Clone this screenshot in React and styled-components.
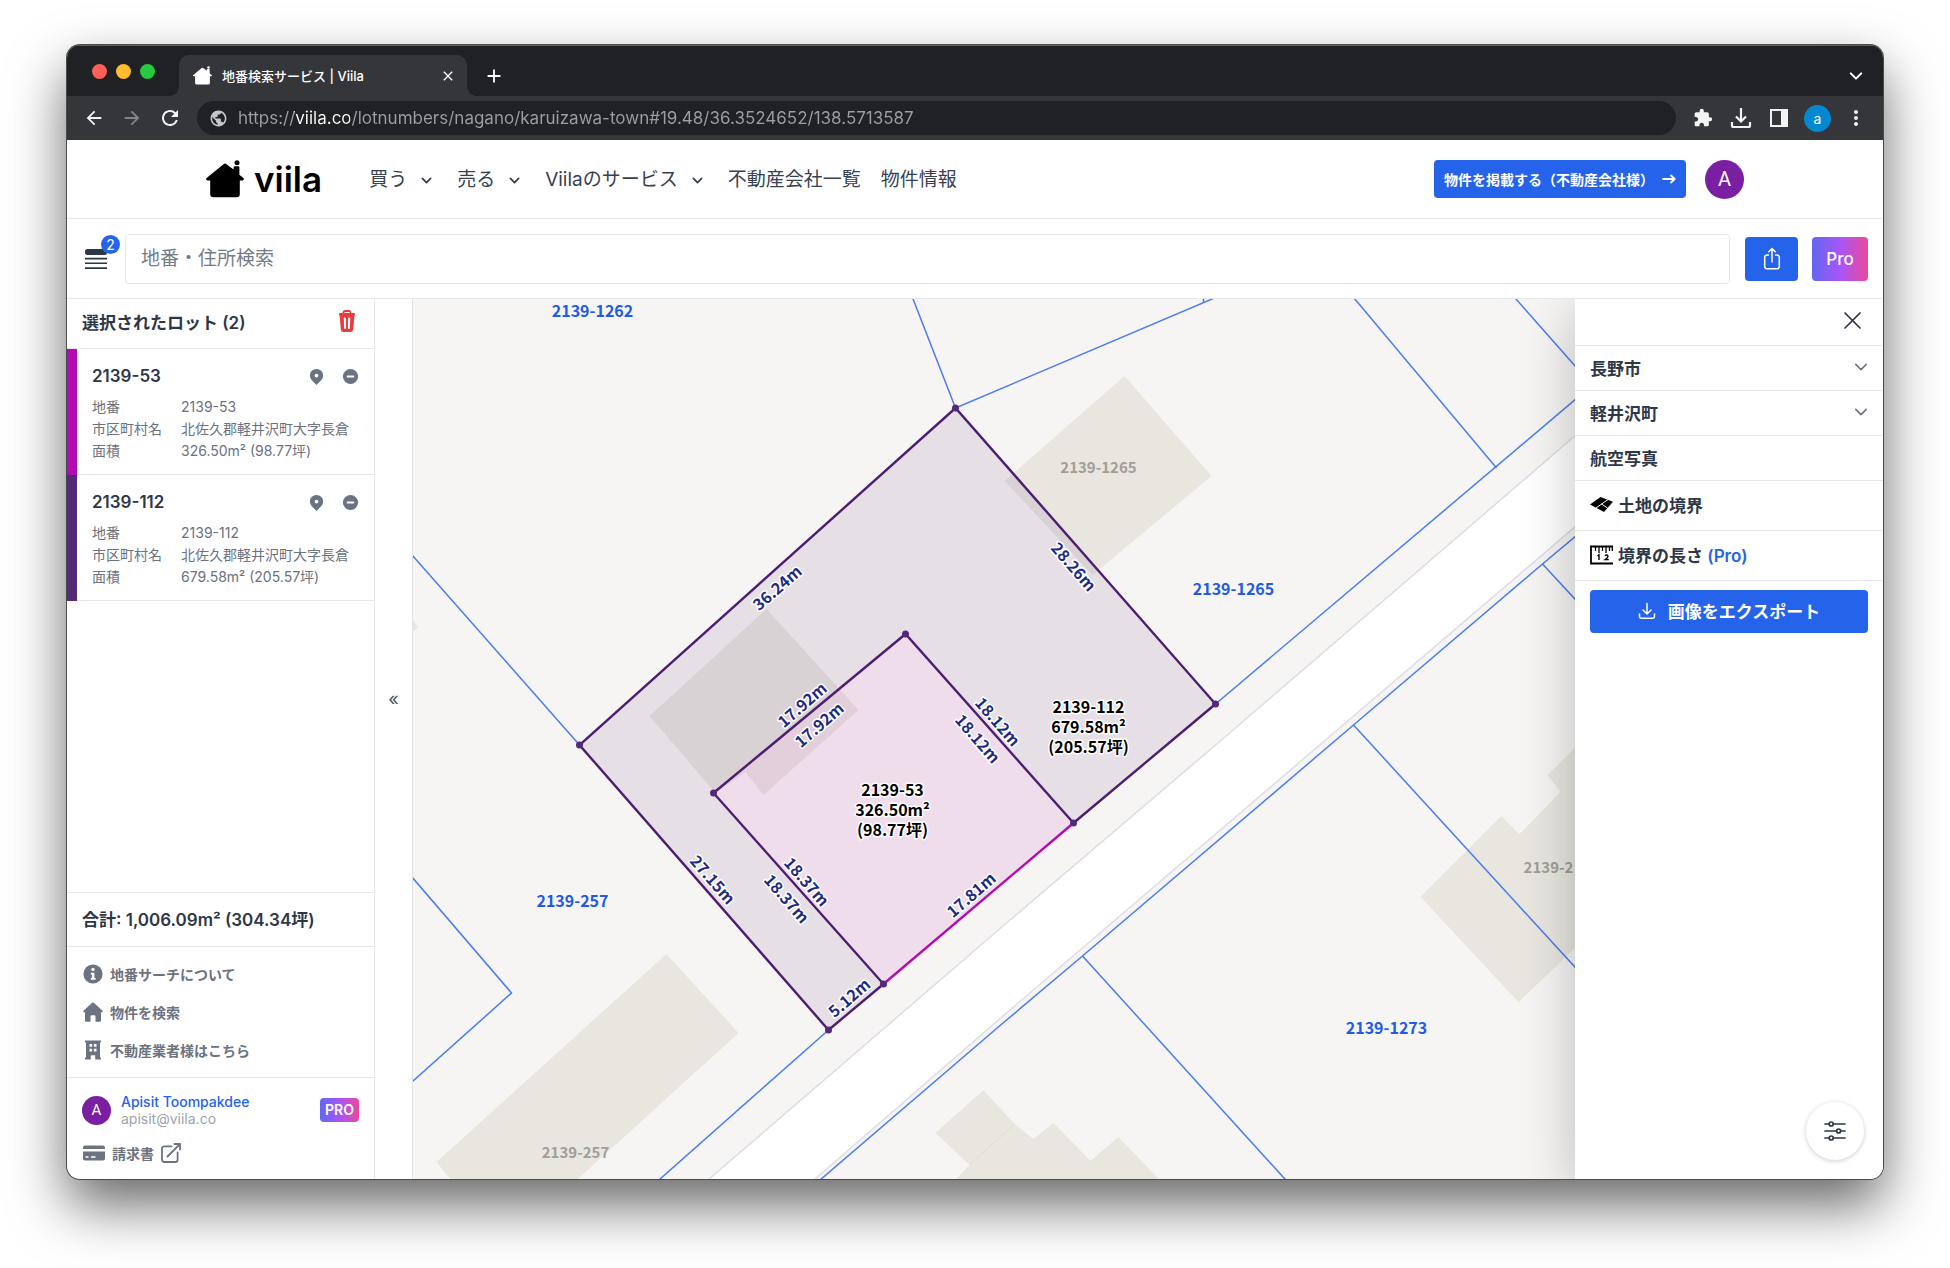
import React from "react";
import styled, { createGlobalStyle } from "styled-components";
import {
  MdAdd,
  MdArrowBack,
  MdArrowForward,
  MdClose,
  MdExtension,
  MdMoreVert,
  MdPublic,
  MdRefresh,
} from "react-icons/md";
import { HiLocationMarker, HiMinusCircle } from "react-icons/hi";

const sans = `Inter, "Noto Sans CJK JP", sans-serif`;

const GlobalStyle = createGlobalStyle`
  * {
    box-sizing: border-box;
  }
  body {
    margin: 0;
    background: #fff;
    color: #2d3748;
    font-family: ${sans};
  }
  button, input {
    font-family: inherit;
    padding: 0;
    border: 0;
    background: none;
    color: inherit;
  }
  button {
    cursor: pointer;
  }
  a {
    color: inherit;
    text-decoration: none;
  }
  svg {
    display: block;
    flex-shrink: 0;
  }
`;

/* ---------- data ---------- */

const lots = [
  {
    id: "2139-53",
    color: "#b10bb1",
    city: "北佐久郡軽井沢町大字長倉",
    area: "326.50m² (98.77坪)",
  },
  {
    id: "2139-112",
    color: "#542a78",
    city: "北佐久郡軽井沢町大字長倉",
    area: "679.58m² (205.57坪)",
  },
];

const roads = "1580,432 1222,740 1000,929 705,1183 811,1183 1000,1019 1326,740 1580,523";

const buildings = [
  "1125,376 1212,476 1093,575 1005,481",
  "767,609 859,710 764,795 746,772 716,793 650,716",
  "667,954 739,1033 574,1183 454,1183 437,1162",
  "984,1090 1015,1124 1034,1139 1054,1123 1091,1161 1119,1137 1163,1183 953,1183 970,1165 936,1133",
  "1421,897 1502,816 1520,834 1561,792 1548,775 1580,743 1580,944 1519,1002",
  "410,617 419,627 410,635",
];

const borders = [
  "912,295 956,408 1222,295",
  "1204,295 1204,303",
  "1352,295 1497,468",
  "1513,295 1580,371",
  "1216,704 1580,396",
  "409,551 580,745",
  "409,873 512,993 409,1085",
  "829,1030 656,1183",
  "1580,533 1543,564 1354,725 1083,956 1000,1026 817,1183",
  "1543,564 1580,604",
  "1354,725 1580,972",
  "1083,956 1289,1183",
];

const corners = [
  [956, 408],
  [1216, 704],
  [1074, 823],
  [884, 984],
  [829, 1030],
  [580, 745],
  [906, 634],
  [714, 793],
];

const placeNames = [
  { text: "2139-1262", x: 593, y: 310 },
  { text: "2139-1265", x: 1234, y: 588 },
  { text: "2139-257", x: 573, y: 900 },
  { text: "2139-1273", x: 1387, y: 1027 },
];

const buildingNames = [
  { text: "2139-1265", x: 1099, y: 466 },
  { text: "2139-257", x: 576, y: 1151 },
  { text: "2139-2", x: 1549, y: 866 },
];

const lotNames = [
  { x: 1089, y: 706, lines: ["2139-112", "679.58m²", "(205.57坪)"] },
  { x: 893, y: 789, lines: ["2139-53", "326.50m²", "(98.77坪)"] },
];

const UP = -41;
const DOWN = 49;

const lengths = [
  { text: "36.24m", x: 777, y: 587, angle: UP },
  { text: "17.92m", x: 802, y: 704, angle: UP },
  { text: "17.92m", x: 819, y: 724, angle: UP },
  { text: "17.81m", x: 971, y: 894, angle: UP },
  { text: "5.12m", x: 849, y: 997, angle: UP },
  { text: "28.26m", x: 1075, y: 566, angle: DOWN },
  { text: "18.12m", x: 999, y: 721, angle: DOWN },
  { text: "18.12m", x: 979, y: 738, angle: DOWN },
  { text: "18.37m", x: 808, y: 881, angle: DOWN },
  { text: "18.37m", x: 788, y: 898, angle: DOWN },
  { text: "27.15m", x: 714, y: 879, angle: DOWN },
];

/* ---------- icons ---------- */

const HouseIcon = ({ size }) => (
  <svg width={size} height={size} viewBox="0 0 38 38" fill="currentColor" aria-hidden="true">
    <path d="M17.5 4.2a2.4 2.4 0 0 1 3 0L27.6 9.600V7.600a1.400 1.400 0 0 1 1.400-1.400h3a1.400 1.400 0 0 1 1.400 1.400v7.200l4 3.300a1.300 1.300 0 0 1-.9 2.300H33.800V34a3.200 3.200 0 0 1-3.200 3.200H7.400A3.200 3.200 0 0 1 4.200 34V20.400H1.500a1.300 1.300 0 0 1-.9-2.300z" />
    <circle cx="31" cy="2.800" r="2.500" />
  </svg>
);

const Chevron = ({ width, stroke }) => (
  <svg width={width} height={width} viewBox="0 0 16 16" fill="none" stroke="currentColor" strokeWidth={stroke} strokeLinecap="round" strokeLinejoin="round" aria-hidden="true">
    <path d="M2 5l6 6 6-6" />
  </svg>
);

const BrowserDownloadIcon = () => (
  <svg width="22" height="22" viewBox="0 0 22 22" fill="none" stroke="currentColor" strokeWidth="2.200" aria-hidden="true">
    <path d="M11 1v13M6 9.500l5 5 5-5M2 15v3.500q0 1.500 1.500 1.500h15q1.500 0 1.500-1.500V15" />
  </svg>
);

const SidePanelIcon = () => (
  <svg width="18" height="18" viewBox="0 0 18 18" aria-hidden="true">
    <path d="M1 1h16v16H1z" fill="none" stroke="currentColor" strokeWidth="2" />
    <path d="M11 1h6v16h-6z" fill="currentColor" />
  </svg>
);

const ListIcon = () => (
  <svg width="22" height="20" viewBox="0 0 22 20" fill="currentColor" aria-hidden="true">
    <rect width="22" height="6" rx="2.500" />
    <path d="M0 8.800h22v1.600H0zM0 13.500h22v1.600H0zM0 18.300h22v1.600H0z" />
  </svg>
);

const ShareIcon = () => (
  <svg width="18" height="24" viewBox="0 0 18 24" fill="none" stroke="currentColor" strokeWidth="1.500" strokeLinecap="round" strokeLinejoin="round" aria-hidden="true">
    <path d="M5.500 8H4a2.300 2.300 0 0 0-2.300 2.300v9.200A2.300 2.300 0 0 0 4 21.800h10a2.300 2.300 0 0 0 2.300-2.300v-9.200A2.300 2.300 0 0 0 14 8h-1.500M9 15V1.500M5.800 4.700L9 1.500l3.200 3.200" />
  </svg>
);

const ArrowIcon = () => (
  <svg width="14" height="10" viewBox="0 0 14 10" fill="none" stroke="currentColor" strokeWidth="1.800" strokeLinecap="round" strokeLinejoin="round" aria-hidden="true">
    <path d="M1 5h11.500M9 1.500L12.700 5 9 8.500" />
  </svg>
);

const TrashIcon = () => (
  <svg width="18" height="22" viewBox="0 0 18 22" aria-hidden="true">
    <path d="M5.500 3.800V2.600Q5.500 1 7.100 1h3.800Q12.500 1 12.500 2.600v1.200" fill="none" stroke="currentColor" strokeWidth="1.800" />
    <path d="M2 3h14q1 0 1 1v1.500H1V4q0-1 1-1zM1.500 5h15l-1.300 14.500Q14.900 22 12.600 22H5.400Q3.100 22 2.800 19.500z" fill="currentColor" />
    <path d="M6.800 8.500l.3 9.500M11.200 8.500l-.3 9.500" stroke="#fff" strokeWidth="2" strokeLinecap="round" />
  </svg>
);

const InfoIcon = () => (
  <svg width="20" height="20" viewBox="0 0 20 20" aria-hidden="true">
    <circle cx="10" cy="10" r="9.600" fill="currentColor" />
    <circle cx="10" cy="5.400" r="1.700" fill="#fff" />
    <path d="M7.800 8.700h3.600v5.200h1.200v1.900H7.800v-1.900h1.100v-3.300H7.800z" fill="#fff" />
  </svg>
);

const HomeIcon = () => (
  <svg width="20" height="20" viewBox="0 0 20 20" fill="currentColor" aria-hidden="true">
    <path d="M9.200.700q.8-.6 1.600 0l8.700 8q.7 1.300-.5 1.600H18v8.300q0 1.200-1.200 1.200h-4.300v-5.300q0-1.200-1.200-1.200H8.700q-1.200 0-1.200 1.200v5.300H3.200Q2 19.800 2 18.600v-8.300H1Q-.2 10 .5 8.700z" />
  </svg>
);

const BuildingIcon = () => (
  <svg width="20" height="20" viewBox="0 0 20 20" fill="currentColor" fillRule="evenodd" aria-hidden="true">
    <path d="M2 .5h16v2h-1v15h1v2h-5.800v-4.200H7.800v4.200H2v-2h1v-15H2zM6.500 4v2.800h2.600V4zm4.400 0v2.800h2.600V4zM6.500 8.800v2.700h2.600V8.800zm4.400 0v2.700h2.600V8.800z" />
  </svg>
);

const CardIcon = () => (
  <svg width="22" height="16" viewBox="0 0 22 16" fill="currentColor" aria-hidden="true">
    <path d="M2 .5h18q2 0 2 2V4H0V2.500q0-2 2-2z" />
    <path d="M0 6.500h22v7q0 2-2 2H2q-2 0-2-2z" />
    <path d="M2.500 12h3M8 12h4.500" stroke="#fff" strokeWidth="1.500" />
  </svg>
);

const ExternalIcon = () => (
  <svg width="20" height="20" viewBox="0 0 20 20" fill="none" stroke="currentColor" strokeWidth="1.800" strokeLinecap="round" strokeLinejoin="round" aria-hidden="true">
    <path d="M10.500 3.300H3.300A2.300 2.300 0 0 0 1 5.600v11A2.300 2.300 0 0 0 3.300 19h11a2.300 2.300 0 0 0 2.300-2.300V9.500M6.500 13.500L19 1M13.500 1H19v5.500" />
  </svg>
);

const PlotIcon = () => (
  <svg width="23" height="23" viewBox="0 0 23 23" aria-hidden="true">
    <path d="M0 11.500L10.500 4 23 8.700 14 19z" fill="#000" />
    <path d="M6 15L18 6.500M11.500 11l6 4" stroke="#fff" strokeWidth="1" />
  </svg>
);

const RulerIcon = () => (
  <svg width="23" height="20" viewBox="0 0 23 20" fill="none" stroke="#000" aria-hidden="true">
    <path d="M23 1.500H1v17h22" strokeWidth="1.800" />
    <path d="M5.500 2v4M9 2v6M12.500 2v4M16 2v6M19.500 2v4M22.300 2v4" strokeWidth="1.300" />
    <path d="M7.500 10.800l1.500-1v5.200M15 10.800q1-1.300 2.300-.6t0 2.500l-2.200 1.900h3.700" strokeWidth="1.400" />
  </svg>
);

const TrayIcon = () => (
  <svg width="18" height="18" viewBox="0 0 18 18" fill="none" stroke="currentColor" strokeWidth="1.500" strokeLinecap="round" strokeLinejoin="round" aria-hidden="true">
    <path d="M1.500 12v2.300a2 2 0 0 0 2 2h11a2 2 0 0 0 2-2V12M9 1.500V12M5 8l4 4 4-4" />
  </svg>
);

const SlidersIcon = () => (
  <svg width="22" height="20" viewBox="0 0 22 20" fill="#fff" stroke="currentColor" strokeWidth="1.700" strokeLinecap="round" aria-hidden="true">
    <path d="M1 3h20M1 10h20M1 17h20" />
    <circle cx="7.200" cy="3" r="2" />
    <circle cx="14.600" cy="10" r="2" />
    <circle cx="7.200" cy="17" r="2" />
  </svg>
);

/* ---------- browser frame ---------- */

const Desktop = styled.div`
  display: flex;
  height: 100vh;
  padding: 45px 67px 89px;
  overflow: hidden;
`;

const BrowserWindow = styled.div`
  display: flex;
  flex-direction: column;
  flex: 1;
  min-width: 0;
  overflow: hidden;
  border-radius: 13px;
  background: #fff;
  box-shadow: 0 0 0 1px #4a4b4c, 0 26px 56px rgba(0, 0, 0, 0.6);
`;

const TabStrip = styled.div`
  display: flex;
  align-items: flex-end;
  height: 51px;
  padding: 0 20px 0 25px;
  background: #202124;
  border-top: 1px solid #5d5e60;
  color: #fff;
`;

const Lights = styled.div`
  display: flex;
  align-self: center;
  gap: 9px;
  margin-right: 24px;
`;

const Light = styled.span`
  width: 15px;
  height: 15px;
  border-radius: 50%;
  background: ${(props) => props.$color};
`;

const Tab = styled.div`
  position: relative;
  display: flex;
  align-items: center;
  gap: 10px;
  width: 288px;
  height: 41px;
  padding: 0 11px 0 14px;
  border-radius: 10px 10px 0 0;
  background: #35363a;
  font-size: 13px;
  font-weight: 500;

  &::before,
  &::after {
    content: "";
    position: absolute;
    bottom: 0;
    width: 10px;
    height: 10px;
  }
  &::before {
    left: -10px;
    background: radial-gradient(circle at 0 0, transparent 10px, #35363a 10px);
  }
  &::after {
    right: -10px;
    background: radial-gradient(circle at 100% 0, transparent 10px, #35363a 10px);
  }
`;

const TabTitle = styled.span`
  flex: 1;
  white-space: nowrap;
`;

const StripButton = styled.button`
  display: flex;
  align-items: center;
  height: 41px;
  margin-left: ${(props) => (props.$end ? "auto" : "16px")};
`;

const Toolbar = styled.div`
  display: flex;
  align-items: center;
  gap: 16px;
  height: 44px;
  padding: 0 16px;
  background: #35363a;
  color: #f1f3f4;
`;

const ToolbarButtons = styled.div`
  display: flex;
  align-items: center;
  gap: 16px;
`;

const ToolbarButton = styled.button`
  display: flex;
  align-items: center;
  justify-content: center;
  width: 22px;
  height: 28px;
  color: ${(props) => (props.$dim ? "#85868a" : "#f1f3f4")};
`;

const Omnibox = styled.div`
  display: flex;
  align-items: center;
  flex: 1;
  gap: 10px;
  height: 34px;
  padding: 0 12px;
  border-radius: 17px;
  background: #202124;
  color: #c4c7c9;
`;

/* the host name is brighter than the rest of the address */
const AddressInput = styled.input`
  flex: 1;
  min-width: 0;
  height: 34px;
  outline: 0;
  font-size: 17px;
  color: #9aa0a6;
  background: linear-gradient(90deg, #9aa0a6 56px, #fff 56px, #fff 112px, #9aa0a6 112px);
  background-clip: text;
  -webkit-text-fill-color: transparent;
`;

const ProfileDot = styled.button`
  width: 27px;
  height: 27px;
  margin: 0 -2px;
  border-radius: 50%;
  background: #0288d1;
  color: #fff;
  font-size: 14px;
`;

/* ---------- site header ---------- */

const SiteHeader = styled.header`
  display: flex;
  justify-content: center;
  height: 79px;
  border-bottom: 1px solid #e5e7eb;
`;

const HeaderInner = styled.div`
  display: flex;
  align-items: center;
  flex: 1;
  max-width: 1538px;
`;

const Logo = styled.a`
  display: flex;
  align-items: center;
  gap: 10px;
  margin-right: 47px;
  color: #000;
  font-size: 35px;
  font-weight: 600;
  line-height: 40px;
`;

const Nav = styled.nav`
  display: flex;
  align-items: center;
  flex: 1;
  gap: 20px;
  padding-top: 2px;
  color: #374151;
`;

const NavItem = styled.a`
  display: flex;
  align-items: center;
  gap: 14px;
  padding-right: ${(props) => (props.$menu ? "5px" : "0")};
  font-size: 19px;
  line-height: 28px;
  white-space: nowrap;
`;

const ListingButton = styled.a`
  display: flex;
  align-items: center;
  gap: 8px;
  height: 38px;
  padding: 0 10px;
  border-radius: 4px;
  background: #2563eb;
  color: #fff;
  font-size: 14px;
  font-weight: 600;
  white-space: nowrap;
`;

const Avatar = styled.span`
  display: flex;
  align-items: center;
  justify-content: center;
  width: ${(props) => props.$size}px;
  height: ${(props) => props.$size}px;
  margin-left: ${(props) => (props.$size > 30 ? "19px" : "0")};
  border-radius: 50%;
  background: #7b1fa2;
  color: #fff;
  font-family: Roboto, sans-serif;
  font-size: ${(props) => (props.$size > 30 ? "20px" : "15px")};
`;

/* ---------- search bar ---------- */

const SearchBar = styled.div`
  display: flex;
  align-items: center;
  height: 80px;
  padding: 0 15px 0 18px;
  border-bottom: 1px solid #e5e7eb;
`;

const ListButton = styled.button`
  position: relative;
  margin-right: 18px;
`;

const Badge = styled.span`
  position: absolute;
  top: -14px;
  right: -13px;
  width: 19px;
  height: 19px;
  border-radius: 50%;
  background: #2563eb;
  color: #fff;
  font-size: 14px;
  line-height: 19px;
`;

const SearchInput = styled.input`
  flex: 1;
  min-width: 0;
  height: 50px;
  margin-right: 15px;
  padding: 0 15px;
  border: 1px solid #e2e4e8;
  border-radius: 4px;
  font-size: 19px;

  &::placeholder {
    color: #757b88;
    opacity: 1;
  }
`;

const ActionButton = styled.button`
  display: flex;
  align-items: center;
  justify-content: center;
  width: ${(props) => (props.$pro ? "56px" : "53px")};
  height: 44px;
  margin-left: ${(props) => (props.$pro ? "14px" : "0")};
  border-radius: 4px;
  background: ${(props) =>
    props.$pro ? "linear-gradient(90deg, #6366f1, #a855f7, #ec4899)" : "#2563eb"};
  color: #fff;
  font-size: 17px;
  font-weight: 500;
`;

/* ---------- body ---------- */

const Body = styled.div`
  display: flex;
  flex: 1;
  min-height: 0;
`;

const Sidebar = styled.aside`
  display: flex;
  flex-direction: column;
  width: 308px;
  border-right: 1px solid #e5e7eb;
`;

const SidebarHeader = styled.div`
  display: flex;
  align-items: center;
  justify-content: space-between;
  height: 50px;
  padding: 0 18px 5px 15px;
  border-bottom: 1px solid #e5e7eb;
  font-size: 17px;
  font-weight: 600;
`;

const TrashButton = styled.button`
  color: #e53e3e;
`;

const LotList = styled.div`
  flex: 1;
  min-height: 0;
  overflow: hidden;
`;

const LotCard = styled.section`
  padding: 15px 14px 12px 15px;
  border-bottom: 1px solid #e5e7eb;
`;

const LotFrame = styled.div`
  border-left: 10px solid ${(props) => props.$color};
`;

const LotTitle = styled.div`
  display: flex;
  align-items: center;
  height: 24px;
  margin-bottom: 8px;
  font-size: 17px;
  font-weight: 600;
`;

const LotButtons = styled.div`
  display: flex;
  gap: 15px;
  margin-left: auto;
  color: #6b7280;
`;

const LotTable = styled.table`
  border-collapse: collapse;
  color: #6b7280;
  font-size: 14px;
  line-height: 22px;
  white-space: nowrap;

  th {
    width: 89px;
    padding: 0;
    font-weight: 400;
    text-align: left;
  }
  td {
    padding: 0;
  }
`;

const Total = styled.div`
  height: 54px;
  padding: 1px 0 0 15px;
  border-top: 1px solid #e5e7eb;
  font-size: 17px;
  font-weight: 600;
  line-height: 53px;
`;

const LinkList = styled.nav`
  padding: 8px 0;
  border-top: 1px solid #e5e7eb;
`;

const SideLink = styled.a`
  display: flex;
  align-items: center;
  gap: 7px;
  height: 38px;
  padding-left: 16px;
  color: #6b7280;
  font-size: 14px;
  font-weight: 600;
`;

const Account = styled.div`
  padding: 13px 0 7px;
  border-top: 1px solid #e5e7eb;
`;

const AccountRow = styled.div`
  display: flex;
  align-items: center;
  gap: 10px;
  height: 38px;
  margin-bottom: 5px;
  padding: 0 15px;
`;

const AccountText = styled.div`
  flex: 1;
  color: #9ca3af;
  font-size: 14px;
  line-height: 17px;
`;

const AccountName = styled.a`
  display: block;
  color: #2563eb;
  font-weight: 500;
`;

const ProTag = styled.span`
  padding: 0 5px;
  border-radius: 4px;
  background: linear-gradient(90deg, #6366f1, #a855f7, #ec4899);
  color: #fff;
  font-size: 14px;
  font-weight: 600;
  line-height: 24px;
`;

const CollapseButton = styled.button`
  width: 38px;
  border-right: 1px solid #dfe1e5;
  color: #4b5563;
  font-size: 18px;
  line-height: 24px;
  padding-bottom: 80px;
`;

const MapArea = styled.main`
  flex: 1;
  min-width: 0;
  background: #f6f5f3;
`;

const MapSvg = styled.svg`
  width: 100%;
  height: 100%;
  font-family: "Noto Sans CJK JP", sans-serif;
  text-anchor: middle;
`;

const MapLabel = styled.text`
  dominant-baseline: central;
  font-size: 16px;
  font-weight: 700;
  fill: ${(props) => props.$fill};
  stroke: #fff;
  stroke-width: ${(props) => (props.$halo ? "3px" : "0")};
  stroke-linejoin: round;
  paint-order: stroke;
`;

/* names of buildings lie under the lot names */
const BuildingLabel = styled(MapLabel)`
  font-size: 15px;
`;

const LayerPanel = styled.aside`
  position: relative;
  width: 308px;
  background: #fff;
  box-shadow: 0 12px 52px rgba(0, 0, 0, 0.24);
  clip-path: inset(0 0 0 -120px);
`;

const PanelTop = styled.div`
  display: flex;
  align-items: center;
  justify-content: flex-end;
  height: 47px;
  padding: 0 22px 3px 0;
  border-bottom: 1px solid #e5e7eb;
`;

const PanelRow = styled.button`
  display: flex;
  align-items: center;
  gap: 5px;
  width: 100%;
  height: ${(props) => (props.$tall ? "50px" : "45px")};
  padding: 0 15px 2px;
  border-bottom: 1px solid #e5e7eb;
  font-size: 17px;
  font-weight: 600;

  svg:last-child {
    margin-left: auto;
    color: #6b7280;
  }
`;

const ProNote = styled.span`
  color: #2563eb;
`;

const ExportButton = styled.button`
  display: flex;
  align-items: center;
  justify-content: center;
  gap: 12px;
  width: calc(100% - 30px);
  height: 43px;
  margin: 9px 15px;
  padding-bottom: 2px;
  border-radius: 4px;
  background: #2563eb;
  color: #fff;
  font-size: 17px;
  font-weight: 600;
`;

const FilterButton = styled.button`
  position: absolute;
  right: 19px;
  bottom: 19px;
  display: flex;
  align-items: center;
  justify-content: center;
  width: 58px;
  height: 58px;
  border-radius: 50%;
  background: #fff;
  box-shadow: 0 1px 5px rgba(0, 0, 0, 0.2);
`;

/* ---------- parts ---------- */

const BrowserBar = () => {
  return (
    <>
      <TabStrip>
        <Lights>
          <Light $color="#ff5f57" />
          <Light $color="#febc2e" />
          <Light $color="#28c840" />
        </Lights>
        <Tab>
          <HouseIcon size={19} />
          <TabTitle>地番検索サービス | Viila</TabTitle>
          <button aria-label="タブを閉じる"><MdClose size={16} /></button>
        </Tab>
        <StripButton aria-label="新しいタブ"><MdAdd size={22} /></StripButton>
        <StripButton $end aria-label="タブを検索"><Chevron width={14} stroke={2.4} /></StripButton>
      </TabStrip>
      <Toolbar>
        <ToolbarButtons>
          <ToolbarButton aria-label="戻る"><MdArrowBack size={22} /></ToolbarButton>
          <ToolbarButton $dim aria-label="進む"><MdArrowForward size={22} /></ToolbarButton>
          <ToolbarButton aria-label="再読み込み"><MdRefresh size={24} /></ToolbarButton>
        </ToolbarButtons>
        <Omnibox>
          <MdPublic size={19} />
          <AddressInput
            aria-label="アドレス"
            readOnly
            value="https://viila.co/lotnumbers/nagano/karuizawa-town#19.48/36.3524652/138.5713587"
          />
        </Omnibox>
        <ToolbarButtons>
          <ToolbarButton aria-label="拡張機能"><MdExtension size={20} /></ToolbarButton>
          <ToolbarButton aria-label="ダウンロード"><BrowserDownloadIcon /></ToolbarButton>
          <ToolbarButton aria-label="サイドパネル"><SidePanelIcon /></ToolbarButton>
          <ProfileDot aria-label="プロフィール">a</ProfileDot>
          <ToolbarButton aria-label="メニュー"><MdMoreVert size={24} /></ToolbarButton>
        </ToolbarButtons>
      </Toolbar>
    </>
  );
};

const Header = () => {
  return (
    <SiteHeader>
      <HeaderInner>
        <Logo href="#">
          <HouseIcon size={38} />
          viila
        </Logo>
        <Nav>
          <NavItem $menu href="#">買う<Chevron width={11} stroke={2.6} /></NavItem>
          <NavItem $menu href="#">売る<Chevron width={11} stroke={2.6} /></NavItem>
          <NavItem $menu href="#">Viilaのサービス<Chevron width={11} stroke={2.6} /></NavItem>
          <NavItem href="#">不動産会社一覧</NavItem>
          <NavItem href="#">物件情報</NavItem>
        </Nav>
        <ListingButton href="#">
          物件を掲載する（不動産会社様）<ArrowIcon />
        </ListingButton>
        <Avatar $size={39}>A</Avatar>
      </HeaderInner>
    </SiteHeader>
  );
};

const LotInfo = (props) => {
  return (
    <LotFrame $color={props.lot.color}>
      <LotCard>
        <LotTitle>
          {props.lot.id}
          <LotButtons>
            <button aria-label="地図で表示"><HiLocationMarker size={19} /></button>
            <button aria-label="選択から外す"><HiMinusCircle size={19} /></button>
          </LotButtons>
        </LotTitle>
        <LotTable>
          <tbody>
            <tr><th scope="row">地番</th><td>{props.lot.id}</td></tr>
            <tr><th scope="row">市区町村名</th><td>{props.lot.city}</td></tr>
            <tr><th scope="row">面積</th><td>{props.lot.area}</td></tr>
          </tbody>
        </LotTable>
      </LotCard>
    </LotFrame>
  );
};

const LotSidebar = () => {
  return (
    <Sidebar>
      <SidebarHeader>
        選択されたロット (2)
        <TrashButton aria-label="すべて削除"><TrashIcon /></TrashButton>
      </SidebarHeader>
      <LotList>
        {lots.map((lot) => (
          <LotInfo key={lot.id} lot={lot} />
        ))}
      </LotList>
      <Total>合計: 1,006.09m² (304.34坪)</Total>
      <LinkList>
        <SideLink href="#"><InfoIcon />地番サーチについて</SideLink>
        <SideLink href="#"><HomeIcon />物件を検索</SideLink>
        <SideLink href="#"><BuildingIcon />不動産業者様はこちら</SideLink>
      </LinkList>
      <Account>
        <AccountRow>
          <Avatar $size={29}>A</Avatar>
          <AccountText>
            <AccountName href="#">Apisit Toompakdee</AccountName>
            apisit@viila.co
          </AccountText>
          <ProTag>PRO</ProTag>
        </AccountRow>
        <SideLink href="#"><CardIcon />請求書<ExternalIcon /></SideLink>
      </Account>
    </Sidebar>
  );
};

const LotMap = () => {
  return (
    <MapArea>
      <MapSvg viewBox="413 299 1163 880" preserveAspectRatio="xMidYMid slice" role="img" aria-label="地番マップ">
        <polygon points={roads} fill="#fff" stroke="#dcdde6" strokeWidth="1.500" />
        {buildings.map((points) => (
          <polygon key={points} points={points} fill="#e8e6df" />
        ))}
        <path d="M970 1165L1015 1124" stroke="#dedcd5" />
        <g fill="none" stroke="#4a7cf0" strokeWidth="1.500">
          {borders.map((points) => (
            <polyline key={points} points={points} />
          ))}
        </g>
        <polygon
          points="956,408 1216,704 1074,823 906,634 714,793 884,984 829,1030 580,745"
          fill="#542a78"
          fillOpacity="0.1"
        />
        <polygon points="906,634 1074,823 884,984 714,793" fill="#b10bb1" fillOpacity="0.1" />
        <g fill="none" stroke="#4c1d70" strokeWidth="2.400">
          <path d="M1074 823L884 984" stroke="#b10bb1" />
          <path d="M1074 823L906 634 714 793 884 984 829 1030 580 745 956 408 1216 704z" />
        </g>
        {corners.map(([x, y]) => (
          <circle key={`${x}-${y}`} cx={x} cy={y} r="3.500" fill="#542a78" />
        ))}
        {buildingNames.map((label) => (
          <BuildingLabel key={label.y} x={label.x} y={label.y} $fill="#a09e98">
            {label.text}
          </BuildingLabel>
        ))}
        {placeNames.map((label) => (
          <MapLabel key={label.y} x={label.x} y={label.y} $fill="#1f5be6">
            {label.text}
          </MapLabel>
        ))}
        {lotNames.map((label) => (
          <MapLabel key={label.y} y={label.y} $fill="#000" $halo>
            {label.lines.map((line, i) => (
              <tspan key={line} x={label.x} dy={i ? 20 : 0}>{line}</tspan>
            ))}
          </MapLabel>
        ))}
        {lengths.map((label) => (
          <MapLabel
            key={`${label.x}-${label.y}`}
            x={label.x}
            y={label.y}
            transform={`rotate(${label.angle} ${label.x} ${label.y})`}
            $fill="#1e2a80"
            $halo
          >
            {label.text}
          </MapLabel>
        ))}
      </MapSvg>
    </MapArea>
  );
};

const Layers = () => {
  return (
    <LayerPanel>
      <PanelTop>
        <button aria-label="閉じる">
          <svg width="17" height="17" viewBox="0 0 17 17" stroke="currentColor" strokeWidth="1.700" strokeLinecap="round">
            <path d="M1 1l15 15M16 1L1 16" />
          </svg>
        </button>
      </PanelTop>
      <PanelRow>長野市<Chevron width={14} stroke={1.8} /></PanelRow>
      <PanelRow>軽井沢町<Chevron width={14} stroke={1.8} /></PanelRow>
      <PanelRow>航空写真</PanelRow>
      <PanelRow $tall><PlotIcon /><span>土地の境界</span></PanelRow>
      <PanelRow $tall><RulerIcon /><span>境界の長さ <ProNote>(Pro)</ProNote></span></PanelRow>
      <ExportButton><TrayIcon />画像をエクスポート</ExportButton>
      <FilterButton aria-label="表示設定"><SlidersIcon /></FilterButton>
    </LayerPanel>
  );
};

const App = () => {
  return (
    <Desktop>
      <GlobalStyle />
      <BrowserWindow>
        <BrowserBar />
        <Header />
        <SearchBar>
          <ListButton aria-label="選択リスト">
            <ListIcon />
            <Badge>2</Badge>
          </ListButton>
          <SearchInput type="text" aria-label="地番・住所検索" placeholder="地番・住所検索" />
          <ActionButton aria-label="共有"><ShareIcon /></ActionButton>
          <ActionButton $pro>Pro</ActionButton>
        </SearchBar>
        <Body>
          <LotSidebar />
          <CollapseButton aria-label="サイドバーを閉じる">«</CollapseButton>
          <LotMap />
          <Layers />
        </Body>
      </BrowserWindow>
    </Desktop>
  );
};

export default App;
